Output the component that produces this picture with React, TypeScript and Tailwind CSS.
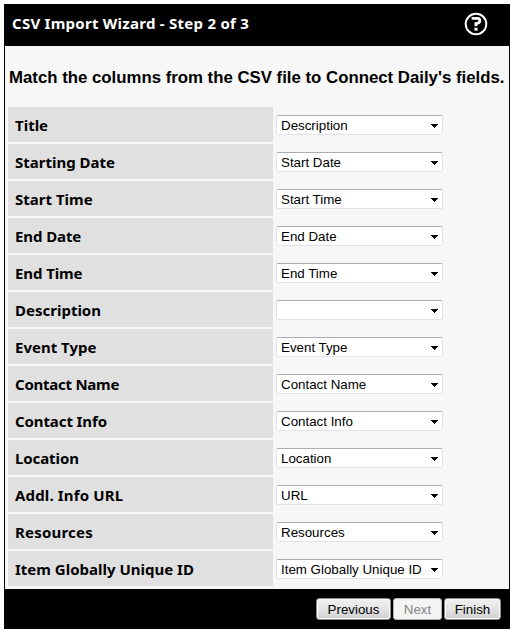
import React from 'react';

const fields: { label: string; value: string; tracking?: string }[] = [
  { label: 'Title', value: 'Description' },
  { label: 'Starting Date', value: 'Start Date' },
  { label: 'Start Time', value: 'Start Time' },
  { label: 'End Date', value: 'End Date', tracking: 'tracking-[-0.1px]' },
  { label: 'End Time', value: 'End Time', tracking: 'tracking-[-0.1px]' },
  { label: 'Description', value: '' },
  { label: 'Event Type', value: 'Event Type' },
  { label: 'Contact Name', value: 'Contact Name', tracking: 'tracking-[-0.25px]' },
  { label: 'Contact Info', value: 'Contact Info', tracking: 'tracking-[-0.1px]' },
  { label: 'Location', value: 'Location', tracking: 'tracking-[-0.1px]' },
  { label: 'Addl. Info URL', value: 'URL', tracking: 'tracking-[0.15px]' },
  { label: 'Resources', value: 'Resources', tracking: 'tracking-[0.2px]' },
  { label: 'Item Globally Unique ID', value: 'Item Globally Unique ID' },
];

function HelpIcon() {
  return (
    <svg width="24" height="24" viewBox="0 0 24 24" fill="none" aria-label="Help">
      <circle cx="12" cy="12" r="10.3" stroke="white" strokeWidth="2" />
      <path d="M7.6 6.4H13.6Q15.8 6.4 15.8 8.7Q15.8 11.2 11.9 11.7V14.2" stroke="white" strokeWidth="2.8" />
      <rect x="10.4" y="15.8" width="3.2" height="2.8" fill="white" />
    </svg>
  );
}

function FieldSelect({ value }: { value: string }) {
  return (
    <div className="flex h-5 w-[167px] items-center justify-between rounded-[2px] border border-[#e2e3ea] border-t-[#abadb3] bg-white pl-1 pr-1 font-['Liberation_Sans',Arial,sans-serif] text-[13.33px] leading-[18px] text-black">
      <span className="whitespace-nowrap pt-px">{value}</span>
      <svg className="mt-px" width="7" height="4" viewBox="0 0 7 4" shapeRendering="crispEdges">
        <path d="M0 0H7V1H6V2H5V3H4V4H3V3H2V2H1V1H0Z" fill="black" />
      </svg>
    </div>
  );
}

function WizardButton({ children, width, disabled }: { children: string; width: string; disabled?: boolean }) {
  return (
    <button
      disabled={disabled}
      className={`${width} h-[22px] rounded-[3px] border pt-px text-center text-[13.33px] leading-[19px] ${
        disabled
          ? 'border-[#adb2b5] bg-[#f4f4f4] text-[#838383]'
          : 'border-[#8a8a8a] bg-linear-to-b from-[#f0f0f0] via-[#e4e4e4] via-50% to-[#cfcfcf] text-black shadow-[inset_0_0_0_1px_#fafafa]'
      }`}
    >
      {children}
    </button>
  );
}

export default function App() {
  return (
    <div className="h-[639px] w-[519px] bg-white pl-1 pt-1 font-['Liberation_Sans',Arial,sans-serif]">
      <div className="w-[506px] bg-black">
        <header className="flex h-[42px] items-center justify-between pl-2 pr-[22px]">
          <h1 className="whitespace-nowrap pb-1 font-['Noto_Sans',sans-serif] text-[15px] font-bold leading-5 tracking-[0.26px] text-white">
            CSV Import Wizard - Step 2 of 3
          </h1>
          <div className="-mt-[3px]">
            <HelpIcon />
          </div>
        </header>
        <main className="mx-px h-[543px] bg-[#f7f7f7] pl-[3px]">
          <h2 className="flex h-[61px] items-center whitespace-nowrap pl-px pt-[3px] text-[16.8px] font-bold text-black">
            Match the columns from the CSV file to Connect Daily's fields.
          </h2>
          <div className="flex flex-col gap-0.5">
            {fields.map(({ label, value, tracking = '' }) => (
              <div key={label} className="flex h-[35px] gap-[3px]">
                <div
                  className={`flex w-[265px] items-center bg-[#e0e0e0] pl-[7px] font-['Noto_Sans',sans-serif] text-[15px] font-bold leading-5 text-black ${tracking}`}
                >
                  {label}
                </div>
                <div className="pt-2">
                  <FieldSelect value={value} />
                </div>
              </div>
            ))}
          </div>
        </main>
        <footer className="flex h-10 justify-end gap-0.5 pr-[9px] pt-[9px]">
          <WizardButton width="w-[75px]">Previous</WizardButton>
          <WizardButton width="w-[49px]" disabled>Next</WizardButton>
          <WizardButton width="w-[57px]">Finish</WizardButton>
        </footer>
      </div>
    </div>
  );
}
